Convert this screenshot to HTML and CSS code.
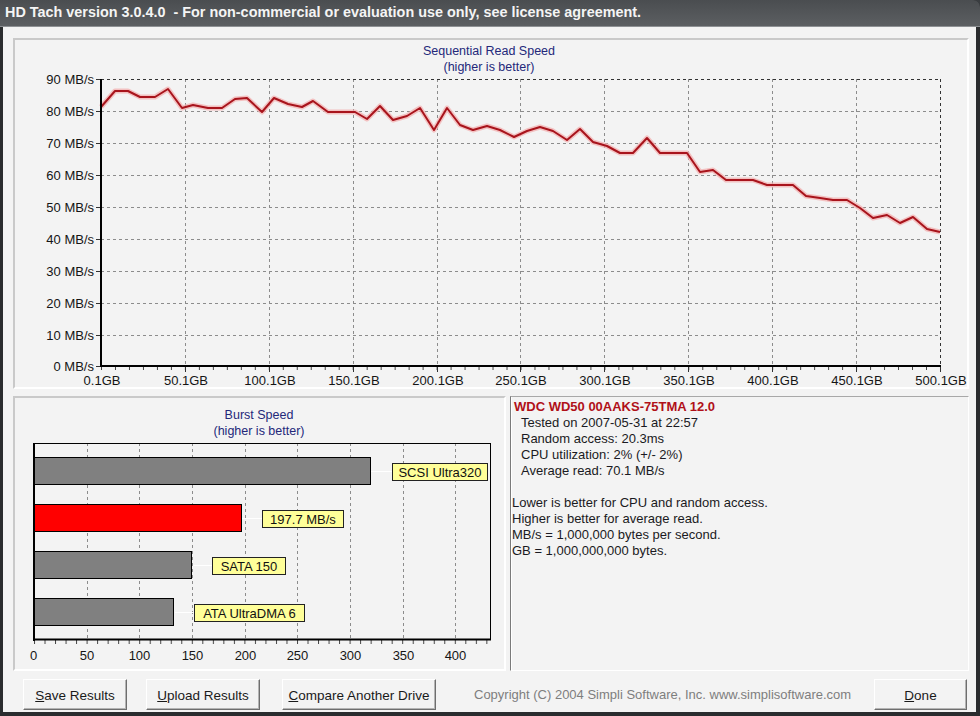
FILE: index.html
```html
<!DOCTYPE html>
<html>
<head>
<meta charset="utf-8">
<title>HD Tach</title>
<link rel="stylesheet" href="styles.css">
</head>
<body>
<div class="window">
  <div class="titlebar">HD Tach version 3.0.4.0&nbsp; - For non-commercial or evaluation use only, see license agreement.</div>
  <div class="client">
    <div class="panel top-panel">
      <svg class="chart" width="952" height="347" viewBox="15 40 952 347">
        <defs>
          <pattern id="tickTop" patternUnits="userSpaceOnUse" x="101" y="366" width="13.983" height="4">
            <line x1="0.5" y1="0" x2="0.5" y2="4" stroke="#444" stroke-width="1"/>
          </pattern>
        </defs>
        <text class="ctitle" x="489" y="55">Sequential Read Speed</text>
        <text class="ctitle" x="489" y="71">(higher is better)</text>
        <g class="grid">
          <line x1="101" y1="111.5" x2="940" y2="111.5"/>
          <line x1="101" y1="143.5" x2="940" y2="143.5"/>
          <line x1="101" y1="175.5" x2="940" y2="175.5"/>
          <line x1="101" y1="207.5" x2="940" y2="207.5"/>
          <line x1="101" y1="239.5" x2="940" y2="239.5"/>
          <line x1="101" y1="271.5" x2="940" y2="271.5"/>
          <line x1="101" y1="303.5" x2="940" y2="303.5"/>
          <line x1="101" y1="335.5" x2="940" y2="335.5"/>
          <line x1="185.5" y1="79" x2="185.5" y2="366"/>
          <line x1="269.5" y1="79" x2="269.5" y2="366"/>
          <line x1="353.5" y1="79" x2="353.5" y2="366"/>
          <line x1="437.5" y1="79" x2="437.5" y2="366"/>
          <line x1="520.5" y1="79" x2="520.5" y2="366"/>
          <line x1="604.5" y1="79" x2="604.5" y2="366"/>
          <line x1="688.5" y1="79" x2="688.5" y2="366"/>
          <line x1="772.5" y1="79" x2="772.5" y2="366"/>
          <line x1="856.5" y1="79" x2="856.5" y2="366"/>
        </g>
        <g class="frame">
          <line x1="101" y1="79.5" x2="940" y2="79.5"/>
          <line x1="940.5" y1="79" x2="940.5" y2="366"/>
        </g>
        <rect x="101" y="366" width="841" height="4" fill="url(#tickTop)"/>
        <g class="ticks">
          <line x1="96" y1="79.5" x2="101" y2="79.5"/>
          <line x1="96" y1="111.5" x2="101" y2="111.5"/>
          <line x1="96" y1="143.5" x2="101" y2="143.5"/>
          <line x1="96" y1="175.5" x2="101" y2="175.5"/>
          <line x1="96" y1="207.5" x2="101" y2="207.5"/>
          <line x1="96" y1="239.5" x2="101" y2="239.5"/>
          <line x1="96" y1="271.5" x2="101" y2="271.5"/>
          <line x1="96" y1="303.5" x2="101" y2="303.5"/>
          <line x1="96" y1="335.5" x2="101" y2="335.5"/>
          <line x1="96" y1="366.5" x2="101" y2="366.5"/>
          <line x1="185.5" y1="366" x2="185.5" y2="372"/>
          <line x1="269.5" y1="366" x2="269.5" y2="372"/>
          <line x1="353.5" y1="366" x2="353.5" y2="372"/>
          <line x1="437.5" y1="366" x2="437.5" y2="372"/>
          <line x1="520.5" y1="366" x2="520.5" y2="372"/>
          <line x1="604.5" y1="366" x2="604.5" y2="372"/>
          <line x1="688.5" y1="366" x2="688.5" y2="372"/>
          <line x1="772.5" y1="366" x2="772.5" y2="372"/>
          <line x1="856.5" y1="366" x2="856.5" y2="372"/>
          <line x1="940.5" y1="366" x2="940.5" y2="372"/>
        </g>
        <polyline class="glow" points="101,107 115,91 128,91 140,97 155,97 168,89 182,108 193,105 208,108 222,108 235,99 247,98 262,112 274,98 288,104 302,107 313,101 328,112 355,112 367,119 380,106 393,120 407,116 420,108 434,130 447,108 460,125 473,130 487,126 500,130 514,137 527,131 540,127 553,131 567,140 580,129 593,142 607,146 620,153 633,153 647,138 660,153 687,153 700,172 713,170 726,180 753,180 767,185 793,185 806,196 820,198 833,200 847,200 860,208 873,218 887,215 900,223 913,217 927,229 940,232"/>
        <polyline class="series" points="101,107 115,91 128,91 140,97 155,97 168,89 182,108 193,105 208,108 222,108 235,99 247,98 262,112 274,98 288,104 302,107 313,101 328,112 355,112 367,119 380,106 393,120 407,116 420,108 434,130 447,108 460,125 473,130 487,126 500,130 514,137 527,131 540,127 553,131 567,140 580,129 593,142 607,146 620,153 633,153 647,138 660,153 687,153 700,172 713,170 726,180 753,180 767,185 793,185 806,196 820,198 833,200 847,200 860,208 873,218 887,215 900,223 913,217 927,229 940,232"/>
        <g class="axis">
          <line x1="101" y1="79" x2="101" y2="367"/>
          <line x1="100" y1="366" x2="941" y2="366"/>
        </g>
        <g class="ylab">
          <text x="94" y="84">90 MB/s</text>
          <text x="94" y="116">80 MB/s</text>
          <text x="94" y="148">70 MB/s</text>
          <text x="94" y="180">60 MB/s</text>
          <text x="94" y="212">50 MB/s</text>
          <text x="94" y="244">40 MB/s</text>
          <text x="94" y="276">30 MB/s</text>
          <text x="94" y="308">20 MB/s</text>
          <text x="94" y="340">10 MB/s</text>
          <text x="94" y="371">0 MB/s</text>
        </g>
        <g class="xlab">
          <text x="102" y="385">0.1GB</text>
          <text x="186" y="385">50.1GB</text>
          <text x="270" y="385">100.1GB</text>
          <text x="354" y="385">150.1GB</text>
          <text x="438" y="385">200.1GB</text>
          <text x="521" y="385">250.1GB</text>
          <text x="605" y="385">300.1GB</text>
          <text x="689" y="385">350.1GB</text>
          <text x="773" y="385">400.1GB</text>
          <text x="857" y="385">450.1GB</text>
          <text x="941" y="385">500.1GB</text>
        </g>
      </svg>
    </div>
    <div class="lower">
      <div class="panel burst-panel">
        <svg class="chart" width="489" height="271" viewBox="15 398 489 271">
          <defs>
            <pattern id="tickB" patternUnits="userSpaceOnUse" x="34" y="640" width="10.52" height="4">
              <line x1="0.5" y1="0" x2="0.5" y2="4" stroke="#444" stroke-width="1"/>
            </pattern>
          </defs>
          <text class="ctitle" x="259" y="419">Burst Speed</text>
          <text class="ctitle" x="259" y="435">(higher is better)</text>
          <g class="grid">
            <line x1="87.5" y1="443" x2="87.5" y2="639"/>
            <line x1="139.5" y1="443" x2="139.5" y2="639"/>
            <line x1="192.5" y1="443" x2="192.5" y2="639"/>
            <line x1="245.5" y1="443" x2="245.5" y2="639"/>
            <line x1="297.5" y1="443" x2="297.5" y2="639"/>
            <line x1="350.5" y1="443" x2="350.5" y2="639"/>
            <line x1="403.5" y1="443" x2="403.5" y2="639"/>
            <line x1="455.5" y1="443" x2="455.5" y2="639"/>
          </g>
          <g class="solidframe">
            <line x1="34" y1="443.5" x2="491" y2="443.5"/>
            <line x1="490.5" y1="443" x2="490.5" y2="640"/>
          </g>
          <rect x="34" y="640" width="457" height="4" fill="url(#tickB)"/>
          <g class="connect">
            <line x1="371" y1="471.5" x2="392" y2="471.5"/>
            <line x1="242" y1="518.5" x2="262" y2="518.5"/>
            <line x1="193" y1="565.5" x2="212" y2="565.5"/>
            <line x1="175" y1="612.5" x2="194" y2="612.5"/>
          </g>
          <rect class="bar" x="34.5" y="457.5" width="336" height="27"/>
          <rect class="bar red" x="34.5" y="504.5" width="207" height="27"/>
          <rect class="bar" x="34.5" y="551.5" width="157" height="27"/>
          <rect class="bar" x="34.5" y="598.5" width="139" height="27"/>
          <g class="tag">
            <rect x="392.5" y="463.5" width="95" height="17"/>
            <text x="440" y="477">SCSI Ultra320</text>
            <rect x="262.5" y="510.5" width="81" height="17"/>
            <text x="303" y="524">197.7 MB/s</text>
            <rect x="212.5" y="557.5" width="73" height="17"/>
            <text x="249" y="571">SATA 150</text>
            <rect x="194.5" y="604.5" width="110" height="17"/>
            <text x="249.5" y="618">ATA UltraDMA 6</text>
          </g>
          <g class="axis">
            <line x1="34" y1="443" x2="34" y2="641"/>
            <line x1="33" y1="639.5" x2="491" y2="639.5"/>
          </g>
          <g class="xlab">
            <text x="33.5" y="660">0</text>
            <text x="87" y="660">50</text>
            <text x="139.5" y="660">100</text>
            <text x="192.5" y="660">150</text>
            <text x="245.5" y="660">200</text>
            <text x="297.5" y="660">250</text>
            <text x="350.5" y="660">300</text>
            <text x="403.5" y="660">350</text>
            <text x="455.5" y="660">400</text>
          </g>
        </svg>
      </div>
      <div class="info-panel">
        <div class="drive">WDC WD50 00AAKS-75TMA 12.0</div>
        <div class="ind">Tested on 2007-05-31 at 22:57</div>
        <div class="ind">Random access: 20.3ms</div>
        <div class="ind">CPU utilization: 2% (+/- 2%)</div>
        <div class="ind">Average read: 70.1 MB/s</div>
        <div class="blank"></div>
        <div>Lower is better for CPU and random access.</div>
        <div>Higher is better for average read.</div>
        <div>MB/s = 1,000,000 bytes per second.</div>
        <div>GB = 1,000,000,000 bytes.</div>
      </div>
    </div>
    <div class="buttons">
      <button class="btn btn-save"><u>S</u>ave Results</button>
      <button class="btn btn-upload"><u>U</u>pload Results</button>
      <button class="btn btn-compare"><u>C</u>ompare Another Drive</button>
      <span class="copyright">Copyright (C) 2004 Simpli Software, Inc. www.simplisoftware.com</span>
      <button class="btn btn-done"><u>D</u>one</button>
    </div>
  </div>
</div>
</body>
</html>
```
FILE: styles.css
```css
* { box-sizing: border-box; }

body {
  margin: 0;
  background: #3a3d40;
  font-family: "Liberation Sans", Arial, sans-serif;
}

.window {
  width: 980px;
  height: 716px;
  display: flex;
  flex-direction: column;
  background: #2a2c2e;
  border-radius: 0 7px 0 0;
  overflow: hidden;
}

.titlebar {
  flex: none;
  height: 27px;
  padding-left: 5px;
  background: linear-gradient(#4a4d50, #5c5f62);
  border-bottom: 1px solid #8e9194;
  color: #f4f4f4;
  font-family: "Liberation Sans", Arial, sans-serif;
  font-weight: bold;
  font-size: 14.4px;
  line-height: 25px;
  white-space: nowrap;
}

.client {
  flex: 1;
  margin: 0 4px 4px 3px;
  padding: 11px 7px 0 10px;
  background: #f3f3f3;
  display: flex;
  flex-direction: column;
}

.panel {
  border: 2px solid;
  border-color: #c9c9c9 #ffffff #ffffff #c9c9c9;
}

.top-panel {
  width: 956px;
  height: 351px;
}

.chart {
  display: block;
  overflow: visible;
  font-family: "Liberation Sans", Arial, sans-serif;
  font-size: 13px;
}

.ctitle {
  fill: #23287a;
  text-anchor: middle;
  font-size: 12.5px;
}

.grid line {
  stroke: #8c8c8c;
  stroke-width: 1;
  stroke-dasharray: 3 3;
}

.frame line {
  stroke: #333;
  stroke-width: 1;
  stroke-dasharray: 3 3;
}

.solidframe line {
  stroke: #000;
  stroke-width: 1;
}

.ticks line {
  stroke: #333;
  stroke-width: 1;
}

.axis line {
  stroke: #000;
  stroke-width: 2;
}

.glow {
  fill: none;
  stroke: #f3b0b0;
  stroke-width: 5;
  stroke-linejoin: round;
  opacity: 0.75;
}

.series {
  fill: none;
  stroke: #a8141c;
  stroke-width: 2;
  stroke-linejoin: round;
}

.ylab text {
  fill: #151515;
  text-anchor: end;
}

.xlab text {
  fill: #151515;
  text-anchor: middle;
}

.connect line {
  stroke: #ffffff;
  stroke-width: 1;
}

.bar {
  fill: #808080;
  stroke: #000;
  stroke-width: 1;
}

.bar.red {
  fill: #ff0000;
}

.tag rect {
  fill: #ffff99;
  stroke: #222;
  stroke-width: 1;
}

.tag text {
  fill: #111;
  text-anchor: middle;
}

.lower {
  display: flex;
  margin-top: 7px;
  height: 275px;
}

.burst-panel {
  width: 493px;
  height: 275px;
}

.info-panel {
  margin-left: 4px;
  width: 459px;
  height: 275px;
  padding: 2px 0 0 1px;
  border-top: 1px solid #a8a8a8;
  border-left: 1px solid #7a7a7a;
  border-right: 1px solid #ffffff;
  border-bottom: 1px solid #ffffff;
  box-shadow: inset 1px 0 0 #ffffff;
  font-size: 13px;
  line-height: 16px;
  color: #1a1a22;
}

.drive {
  padding-left: 2px;
  color: #b01018;
  font-weight: bold;
}

.ind {
  padding-left: 9px;
}

.blank {
  height: 16px;
}

.buttons {
  display: flex;
  align-items: stretch;
  margin-top: 8px;
  height: 31px;
}

.btn {
  font-family: "Liberation Sans", Arial, sans-serif;
  font-size: 13.5px;
  color: #1a1a1a;
  background: #f3f3f3;
  border: 1px solid;
  border-color: #ffffff #6e6e6e #6e6e6e #ffffff;
  box-shadow: inset -1px -1px 0 #b4b4b4;
  padding: 1px 0 0 0;
  margin: 0;
}

.btn-save { margin-left: 10px; width: 104px; }
.btn-upload { margin-left: 19px; width: 114px; }
.btn-compare { margin-left: 22px; width: 154px; }
.btn-done { margin-left: auto; margin-right: 2px; width: 93px; }

.copyright {
  margin-left: 38px;
  padding-top: 8px;
  font-size: 13px;
  color: #7e7e7e;
  white-space: nowrap;
}
```
